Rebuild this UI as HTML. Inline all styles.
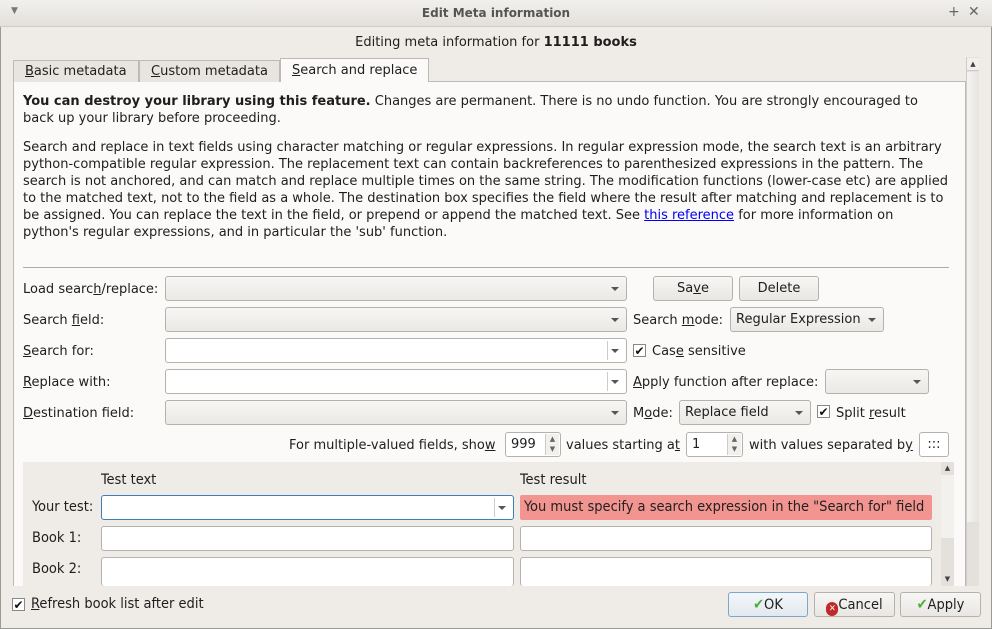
<!DOCTYPE html>
<html><head><meta charset="utf-8"><style>
*{box-sizing:border-box;margin:0;padding:0}
body{width:992px;height:629px;overflow:hidden;background:#efece8;font-family:"DejaVu Sans","Liberation Sans",sans-serif;font-size:13px;color:#1e1e1e;position:relative}
.a{position:absolute;white-space:nowrap}
.title{left:0;top:0;width:992px;height:27px;background:linear-gradient(#f2f0ed,#e3e0db);border-bottom:1px solid #cfcbc5;text-align:center;line-height:27px;font-weight:bold;font-size:12px;color:#555}
.win{left:0;top:0;width:992px;height:629px;border:1px solid #9c9a96;border-radius:3px 3px 0 0}
.pane{left:13px;top:81px;width:953px;height:505px;background:#fcfaf8;border:1px solid #bdb9b4;border-bottom:none}
.tab{top:60px;height:22px;border:1px solid #bdb9b4;border-bottom:none;background:#e8e5e1;line-height:22px;padding:0 11px}
.combo{height:25px;border:1px solid #b5b1ac;border-radius:3px;background:linear-gradient(#f7f6f4,#ebe9e6)}
.edit{height:25px;border:1px solid #b5b1ac;border-radius:3px;background:#fff}
.arr{position:absolute;right:7px;top:10px;width:0;height:0;border-left:4px solid transparent;border-right:4px solid transparent;border-top:4px solid #555}
.sep{position:absolute;right:18px;top:2px;bottom:2px;border-left:1px solid #ccc}
.spin{position:absolute;right:1px;top:1px;bottom:1px;width:14px;border-left:1px solid #ccc;background:#f2f0ed;font-size:7px;line-height:10px;text-align:center;color:#666}
.btn{height:25px;border:1px solid #b5b1ac;border-radius:3px;background:linear-gradient(#f7f6f4,#e9e7e4);text-align:center;line-height:24px}
.lbl{line-height:17px}
.cb{width:13px;height:13px;border:1px solid #888;background:#fff;font-size:12px;line-height:12px;text-align:center;font-weight:bold;color:#111}
u{text-decoration:underline}
p{position:absolute;left:23px;width:918px;line-height:17px;white-space:normal}
.cond{font-family:"DejaVu Sans Condensed","DejaVu Sans",sans-serif;font-size:14.5px}
</style></head><body>
<div class="a win"></div>
<div class="a title">Edit Meta information</div>
<div class="a" style="left:11px;top:6px;color:#777;font-size:9px">▼</div>
<div class="a" style="left:948px;top:4px;color:#666;font-size:14px">+</div>
<div class="a" style="left:968px;top:4px;color:#666;font-size:14px">✕</div>
<div class="a" style="left:0;top:35px;width:992px;text-align:center">Editing meta information for <b>11111 books</b></div>
<div class="a pane"></div>
<div class="a tab" style="left:13px;width:126px"><u>B</u>asic metadata</div>
<div class="a tab" style="left:139px;width:141px"><u>C</u>ustom metadata</div>
<div class="a tab" style="left:280px;top:58px;height:24px;width:149px;background:#fcfaf8;z-index:2;line-height:24px"><u>S</u>earch and replace</div>
<div class="a" style="left:966px;top:57px;width:13px;height:529px;background:#e4e1dd;border-left:1px solid #ccc"></div>
<div class="a" style="left:967px;top:58px;width:12px;height:13px;background:#f2f0ed;border-bottom:1px solid #ccc;font-size:7px;text-align:center;line-height:13px;color:#444">▲</div>
<div class="a" style="left:967px;top:72px;width:12px;height:450px;background:linear-gradient(90deg,#f5f4f2,#e6e3df)"></div>
<p style="top:93px"><b>You can destroy your library using this feature.</b> Changes are permanent. There is no undo function. You are strongly encouraged to back up your library before proceeding.</p>
<p style="top:139px;width:930px">Search and replace in text fields using character matching or regular expressions. In regular expression mode, the search text is an arbitrary python-compatible regular expression. The replacement text can contain backreferences to parenthesized expressions in the pattern. The search is not anchored, and can match and replace multiple times on the same string. The modification functions (lower-case etc) are applied to the matched text, not to the field as a whole. The destination box specifies the field where the result after matching and replacement is to be assigned. You can replace the text in the field, or prepend or append the matched text. See <span style="color:#0000ee;text-decoration:underline">this reference</span> for more information on python's regular expressions, and in particular the 'sub' function.</p>
<div class="a" style="left:23px;top:267px;width:926px;border-top:1px solid #aaa"></div>
<div class="a lbl" style="left:23px;top:281px">Load searc<u>h</u>/replace:</div>
<div class="a lbl" style="left:23px;top:312px">Search <u>f</u>ield:</div>
<div class="a lbl" style="left:23px;top:343px"><u>S</u>earch for:</div>
<div class="a lbl" style="left:23px;top:374px"><u>R</u>eplace with:</div>
<div class="a lbl" style="left:23px;top:405px"><u>D</u>estination field:</div>
<div class="a combo" style="left:165px;top:276px;width:462px"><div class="arr"></div></div>
<div class="a combo" style="left:165px;top:307px;width:462px"><div class="arr"></div></div>
<div class="a edit" style="left:165px;top:338px;width:462px"><div class="sep"></div><div class="arr"></div></div>
<div class="a edit" style="left:165px;top:369px;width:462px"><div class="sep"></div><div class="arr"></div></div>
<div class="a combo" style="left:165px;top:400px;width:462px"><div class="arr"></div></div>
<div class="a btn" style="left:653px;top:276px;width:80px">Sa<u>v</u>e</div>
<div class="a btn" style="left:739px;top:276px;width:80px">Delete</div>
<div class="a lbl" style="left:633px;top:312px">Search <u>m</u>ode:</div>
<div class="a combo" style="left:730px;top:307px;width:154px;padding-left:5px;line-height:24px">Regular Expression<div class="arr"></div></div>
<div class="a cb" style="left:633px;top:344px">✔</div>
<div class="a lbl" style="left:652px;top:343px">Cas<u>e</u> sensitive</div>
<div class="a lbl" style="left:633px;top:374px"><u>A</u>pply function after replace:</div>
<div class="a combo" style="left:825px;top:369px;width:104px"><div class="arr"></div></div>
<div class="a lbl" style="left:633px;top:405px">M<u>o</u>de:</div>
<div class="a combo" style="left:679px;top:400px;width:132px;padding-left:5px;line-height:24px">Replace field<div class="arr"></div></div>
<div class="a cb" style="left:817px;top:405px">✔</div>
<div class="a lbl" style="left:836px;top:405px">Split <u>r</u>esult</div>
<div class="a lbl" style="left:289px;top:437px">For multiple-valued fields, sho<u>w</u></div>
<div class="a edit" style="left:505px;top:432px;width:56px;padding-left:5px;line-height:24px">999<div class="spin">▲<br>▼</div></div>
<div class="a lbl" style="left:566px;top:437px">values starting a<u>t</u></div>
<div class="a edit" style="left:686px;top:432px;width:57px;padding-left:5px;line-height:24px">1<div class="spin">▲<br>▼</div></div>
<div class="a lbl" style="left:749px;top:437px">with values separated b<u>y</u></div>
<div class="a edit" style="left:919px;top:432px;width:30px;text-align:center;line-height:23px">:::</div>
<div class="a" style="left:23px;top:462px;width:918px;height:124px;background:#efece8"></div>
<div class="a" style="left:941px;top:462px;width:13px;height:124px;background:#e4e1dd"></div>
<div class="a" style="left:941px;top:462px;width:13px;height:13px;font-size:7px;text-align:center;line-height:13px;color:#444">▲</div>
<div class="a" style="left:941px;top:475px;width:13px;height:63px;background:#f3f1ee"></div>
<div class="a" style="left:941px;top:573px;width:13px;height:13px;font-size:7px;text-align:center;line-height:13px;color:#444">▼</div>
<div class="a lbl cond" style="left:101px;top:472px">Test text</div>
<div class="a lbl cond" style="left:520px;top:472px">Test result</div>
<div class="a lbl cond" style="left:32px;top:499px">Your test:</div>
<div class="a lbl cond" style="left:32px;top:530px">Book 1:</div>
<div class="a lbl cond" style="left:32px;top:561px">Book 2:</div>
<div class="a edit" style="left:101px;top:495px;width:413px;border-color:#3d7fb8"><div class="sep"></div><div class="arr"></div></div>
<div class="a cond" style="left:520px;top:495px;width:412px;height:25px;background:#f29490;border-radius:2px;line-height:25px;padding-left:4px;color:#222">You must specify a search expression in the "Search for" field</div>
<div class="a edit" style="left:101px;top:526px;width:413px"></div>
<div class="a edit" style="left:520px;top:526px;width:412px"></div>
<div class="a edit" style="left:101px;top:557px;width:413px;height:29px;border-bottom:none"></div>
<div class="a edit" style="left:520px;top:557px;width:412px;height:29px;border-bottom:none"></div>
<div class="a cb" style="left:12px;top:598px">✔</div>
<div class="a lbl cond" style="left:31px;top:596px"><u>R</u>efresh book list after edit</div>
<div class="a btn cond" style="left:728px;top:592px;width:80px;border-color:#7ea6c8;background:linear-gradient(#f4f7fa,#e2e8ee)"><span style="color:#4caf3a">✔</span>OK</div>
<div class="a btn cond" style="left:814px;top:592px;width:81px"><span style="display:inline-block;width:12px;height:14px;border-radius:6px;background:#c0282a;color:#fff;font-size:9px;line-height:14px;vertical-align:-2px">✕</span>Cancel</div>
<div class="a btn cond" style="left:900px;top:592px;width:81px"><span style="color:#4caf3a">✔</span>Apply</div>
</body></html>
